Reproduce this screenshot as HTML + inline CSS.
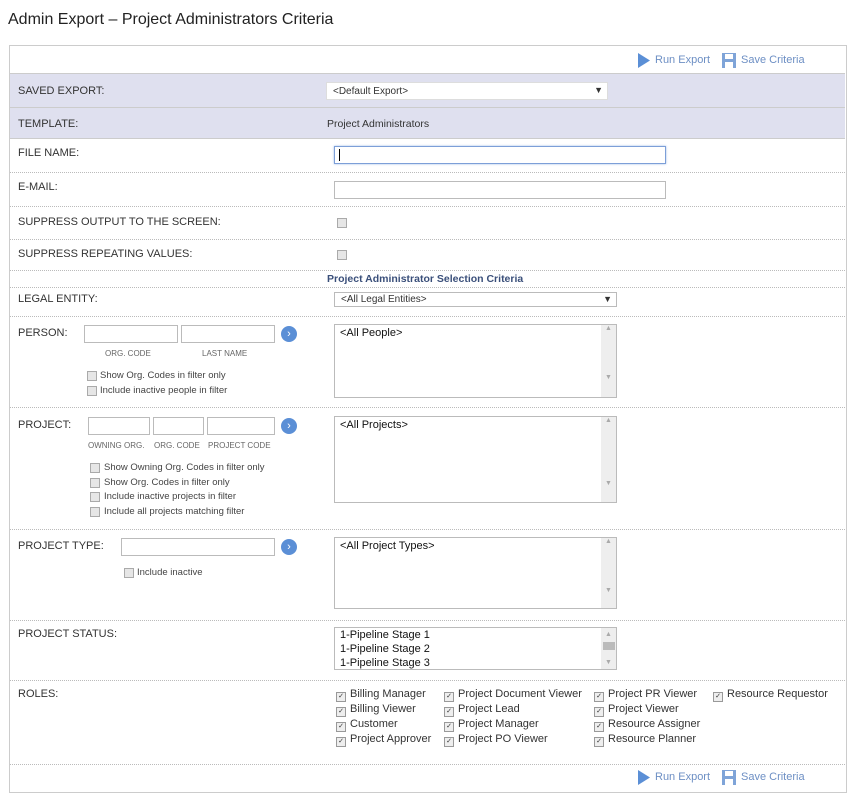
<!DOCTYPE html><html><head><style>
body{margin:0;background:#fff;font-family:"Liberation Sans",Arial,sans-serif;color:#333;width:856px;height:803px;position:relative;overflow:hidden}
.a{position:absolute}
h1{position:absolute;left:8px;top:11px;margin:0;font-size:16px;font-weight:normal;color:#222}
.box{position:absolute;left:9px;top:45px;width:836px;height:746px;border:1px solid #ccc}
.hl{position:absolute;left:10px;width:835px;border-top:1px dotted #bbb}
.band{position:absolute;left:10px;width:835px;background:#dfe0ef}
.lbl{position:absolute;left:18px;font-size:11px;color:#333}
.in{position:absolute;border:1px solid #bbb;background:#fff;box-sizing:border-box;height:18px}
.sm{position:absolute;font-size:8px;color:#666}
.cb{position:absolute;width:8px;height:8px;border:1px solid #aaa;background:#e6e6e6}
.ct{position:absolute;font-size:9.5px;color:#444}
.go{position:absolute;width:16px;height:16px;border-radius:50%;background:#5b8fd6;color:#fff;font-size:11px;line-height:16px;text-align:center}
.lst{position:absolute;border:1px solid #bbb;background:#fff;box-sizing:border-box;font-size:11px;color:#111;padding:2px 5px}
.sb{position:absolute;right:0;top:0;bottom:0;width:15px;background:#eee;font-size:7px;color:#aaa;text-align:center}
.act{position:absolute;font-size:11px;color:#6d8fc4}
.ro{position:absolute;font-size:11px;color:#333}
.ro i{display:inline-block;width:8px;height:8px;border:1px solid #999;background:#eee;font-style:normal;font-size:7px;line-height:8px;text-align:center;margin-right:4px;vertical-align:-1px}
</style></head><body>
<h1>Admin Export – Project Administrators Criteria</h1>
<div class="box"></div>
<div class="band" style="top:73px;height:34px"></div>
<div class="band" style="top:107px;height:31px;border-top:1px solid #ccc"></div>
<div class="hl" style="top:73px;border-top:1px solid #ccc"></div>
<div class="hl" style="top:138px;border-top:1px solid #ccc"></div>
<div class="hl" style="top:172px"></div><div class="hl" style="top:206px"></div><div class="hl" style="top:239px"></div><div class="hl" style="top:270px"></div><div class="hl" style="top:287px"></div><div class="hl" style="top:316px"></div><div class="hl" style="top:407px"></div><div class="hl" style="top:529px"></div><div class="hl" style="top:620px"></div><div class="hl" style="top:680px"></div><div class="hl" style="top:764px"></div>

<svg class="a" style="left:637px;top:53px" width="14" height="15"><path d="M1 0L13 7.5L1 15Z" fill="#5b8fd6"/></svg>
<div class="act" style="left:655px;top:54px">Run Export</div>
<svg class="a" style="left:722px;top:53px" width="14" height="15"><rect x="0" y="0" width="14" height="15" fill="#7fa4d8"/><rect x="3" y="1" width="8" height="5" fill="#fff"/><rect x="3" y="9" width="8" height="6" fill="#fff"/></svg>
<div class="act" style="left:741px;top:54px">Save Criteria</div>

<div class="lbl" style="top:85px">SAVED EXPORT:</div>
<div class="in" style="left:326px;top:82px;width:282px;height:18px;font-size:10px;padding:3px 6px;border-color:#ddd">&lt;Default Export&gt;<span style="position:absolute;right:4px;top:2px;font-size:9px">▼</span></div>
<div class="lbl" style="top:118px">TEMPLATE:</div>
<div class="a" style="left:327px;top:118px;font-size:10.5px">Project Administrators</div>
<div class="lbl" style="top:147px">FILE NAME:</div>
<div class="in" style="left:334px;top:146px;width:332px;height:18px;border:1px solid #7d9fd8;box-shadow:0 0 2px #9cb7e6"><span style="position:absolute;left:4px;top:2px;width:1px;height:12px;background:#000"></span></div>
<div class="lbl" style="top:181px">E-MAIL:</div>
<div class="in" style="left:334px;top:181px;width:332px"></div>
<div class="lbl" style="top:216px">SUPPRESS OUTPUT TO THE SCREEN:</div>
<div class="cb" style="left:337px;top:218px"></div>
<div class="lbl" style="top:248px">SUPPRESS REPEATING VALUES:</div>
<div class="cb" style="left:337px;top:250px"></div>
<div class="a" style="left:327px;top:273px;font-size:10.5px;font-weight:bold;color:#3a4f7a">Project Administrator Selection Criteria</div>
<div class="lbl" style="top:293px">LEGAL ENTITY:</div>
<div class="in" style="left:334px;top:292px;width:283px;height:15px;font-size:10px;padding:1px 6px">&lt;All Legal Entities&gt;<span style="position:absolute;right:4px;top:1px;font-size:9px">▼</span></div>

<div class="lbl" style="top:327px">PERSON:</div>
<div class="in" style="left:84px;top:325px;width:94px"></div>
<div class="in" style="left:181px;top:325px;width:94px"></div>
<div class="go" style="left:281px;top:326px">›</div>
<div class="sm" style="left:105px;top:349px">ORG. CODE</div>
<div class="sm" style="left:202px;top:349px">LAST NAME</div>
<div class="cb" style="left:87px;top:371px"></div><div class="ct" style="left:100px;top:370px">Show Org. Codes in filter only</div>
<div class="cb" style="left:87px;top:386px"></div><div class="ct" style="left:100px;top:385px">Include inactive people in filter</div>
<div class="lst" style="left:334px;top:324px;width:283px;height:74px">&lt;All People&gt;<div class="sb">▲<br><br><br><br><br><br><br>▼</div></div>

<div class="lbl" style="top:419px">PROJECT:</div>
<div class="in" style="left:88px;top:417px;width:62px"></div>
<div class="in" style="left:153px;top:417px;width:51px"></div>
<div class="in" style="left:207px;top:417px;width:68px"></div>
<div class="go" style="left:281px;top:418px">›</div>
<div class="sm" style="left:88px;top:441px">OWNING ORG.</div>
<div class="sm" style="left:154px;top:441px">ORG. CODE</div>
<div class="sm" style="left:208px;top:441px">PROJECT CODE</div>
<div class="cb" style="left:90px;top:463px"></div><div class="ct" style="left:104px;top:462px">Show Owning Org. Codes in filter only</div>
<div class="cb" style="left:90px;top:478px"></div><div class="ct" style="left:104px;top:477px">Show Org. Codes in filter only</div>
<div class="cb" style="left:90px;top:492px"></div><div class="ct" style="left:104px;top:491px">Include inactive projects in filter</div>
<div class="cb" style="left:90px;top:507px"></div><div class="ct" style="left:104px;top:506px">Include all projects matching filter</div>
<div class="lst" style="left:334px;top:416px;width:283px;height:87px">&lt;All Projects&gt;<div class="sb">▲<br><br><br><br><br><br><br><br><br>▼</div></div>

<div class="lbl" style="top:540px">PROJECT TYPE:</div>
<div class="in" style="left:121px;top:538px;width:154px"></div>
<div class="go" style="left:281px;top:539px">›</div>
<div class="cb" style="left:124px;top:568px"></div><div class="ct" style="left:137px;top:567px">Include inactive</div>
<div class="lst" style="left:334px;top:537px;width:283px;height:72px">&lt;All Project Types&gt;<div class="sb">▲<br><br><br><br><br><br><br>▼</div></div>

<div class="lbl" style="top:628px">PROJECT STATUS:</div>
<div class="lst" style="left:334px;top:627px;width:283px;height:43px;line-height:14px;padding:0 5px">1-Pipeline Stage 1<br>1-Pipeline Stage 2<br>1-Pipeline Stage 3<div class="sb">▲<br><span style="display:inline-block;width:12px;height:8px;background:#bbb"></span><br>▼</div></div>

<div class="lbl" style="top:688px">ROLES:</div>
<div class="ro" style="left:336px;top:688px"><i>✓</i>Billing Manager</div>
<div class="ro" style="left:336px;top:703px"><i>✓</i>Billing Viewer</div>
<div class="ro" style="left:336px;top:718px"><i>✓</i>Customer</div>
<div class="ro" style="left:336px;top:733px"><i>✓</i>Project Approver</div>
<div class="ro" style="left:444px;top:688px"><i>✓</i>Project Document Viewer</div>
<div class="ro" style="left:444px;top:703px"><i>✓</i>Project Lead</div>
<div class="ro" style="left:444px;top:718px"><i>✓</i>Project Manager</div>
<div class="ro" style="left:444px;top:733px"><i>✓</i>Project PO Viewer</div>
<div class="ro" style="left:594px;top:688px"><i>✓</i>Project PR Viewer</div>
<div class="ro" style="left:594px;top:703px"><i>✓</i>Project Viewer</div>
<div class="ro" style="left:594px;top:718px"><i>✓</i>Resource Assigner</div>
<div class="ro" style="left:594px;top:733px"><i>✓</i>Resource Planner</div>
<div class="ro" style="left:713px;top:688px"><i>✓</i>Resource Requestor</div>

<svg class="a" style="left:637px;top:770px" width="14" height="15"><path d="M1 0L13 7.5L1 15Z" fill="#5b8fd6"/></svg>
<div class="act" style="left:655px;top:771px">Run Export</div>
<svg class="a" style="left:722px;top:770px" width="14" height="15"><rect x="0" y="0" width="14" height="15" fill="#7fa4d8"/><rect x="3" y="1" width="8" height="5" fill="#fff"/><rect x="3" y="9" width="8" height="6" fill="#fff"/></svg>
<div class="act" style="left:741px;top:771px">Save Criteria</div>
</body></html>
